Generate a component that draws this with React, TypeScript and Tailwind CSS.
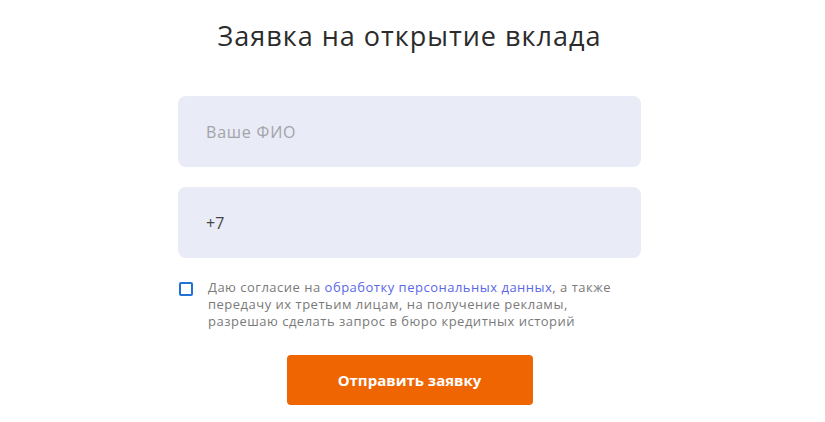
import React from "react";

export default function App() {
  return (
    <div className="w-[825px] h-[422px] bg-white flex justify-center pr-[6px]" style={{ fontFamily: '"Open Sans", "Noto Sans", sans-serif' }}>
      <div className="w-[463px] flex flex-col items-center">
        <h1 className="mt-[17px] text-[27px] leading-[38px] text-[#2b2b2b] font-normal tracking-[1px]">Заявка на открытие вклада</h1>
        <div className="mt-[41px] w-full flex flex-col gap-[20px]">
          <div className="h-[71px] w-full rounded-[8px] bg-[#e9ebf7] flex items-center pl-[28px] text-[16px] tracking-[0.8px] text-[#a3a3a8]">Ваше ФИО</div>
          <div className="h-[71px] w-full rounded-[8px] bg-[#e9ebf7] flex items-center pl-[28px] text-[16px] text-[#444]">+7</div>
        </div>
        <div className="mt-[21px] w-full flex items-start gap-[15px] pl-[1px]">
          <div className="mt-[3px] w-[14px] h-[14px] shrink-0 rounded-[2px] border-2 border-[#1f72d6]" />
          <p className="w-[420px] text-[13px] leading-[17px] tracking-[0.5px] text-[#7a7a7a]">
            Даю согласие на <span className="text-[#5a67e8]">обработку персональных данных</span>, а также передачу их третьим лицам, на получение рекламы, разрешаю сделать запрос в бюро кредитных историй
          </p>
        </div>
        <button className="mt-[25px] w-[246px] h-[50px] rounded-[4px] bg-[#ee6502] text-white text-[15px] font-bold">Отправить заявку</button>
      </div>
    </div>
  );
}
